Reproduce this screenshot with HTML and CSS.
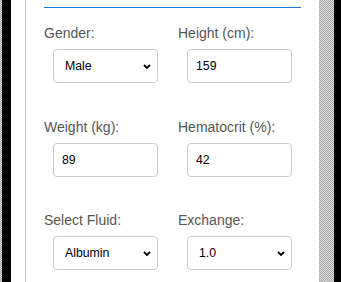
FILE: index.html
```html
<!DOCTYPE html>
<html lang="en">
<head>
    <meta charset="UTF-8">
    <meta name="viewport" content="width=device-width, initial-scale=1.0">
    <title>Plasma Exchange Calculator</title>
    <link rel="stylesheet" href="styles.css">
</head>
<body>
    <div class="edge-dither"></div>
    <div class="edge-black"></div>
    <div class="gutter"></div>
    <main class="panel">
        <hr class="divider">
        <form class="fields">
            <div class="field">
                <label for="gender">Gender:</label>
                <div class="select-wrap">
                    <select id="gender">
                        <option>Male</option>
                        <option>Female</option>
                    </select>
                    <svg class="chevron" width="8" height="5" viewBox="0 0 8 5"><path d="M1 1l3 3 3-3" fill="none" stroke="#000" stroke-width="1.8"/></svg>
                </div>
            </div>
            <div class="field">
                <label for="height">Height (cm):</label>
                <input id="height" type="text" value="159">
            </div>
            <div class="field">
                <label for="weight">Weight (kg):</label>
                <input id="weight" type="text" value="89">
            </div>
            <div class="field">
                <label for="hct">Hematocrit (%):</label>
                <input id="hct" type="text" value="42">
            </div>
            <div class="field">
                <label for="fluid">Select Fluid:</label>
                <div class="select-wrap">
                    <select id="fluid">
                        <option>Albumin</option>
                        <option>Plasma</option>
                    </select>
                    <svg class="chevron" width="8" height="5" viewBox="0 0 8 5"><path d="M1 1l3 3 3-3" fill="none" stroke="#000" stroke-width="1.8"/></svg>
                </div>
            </div>
            <div class="field">
                <label for="exchange">Exchange:</label>
                <div class="select-wrap">
                    <select id="exchange">
                        <option>1.0</option>
                        <option>1.5</option>
                    </select>
                    <svg class="chevron" width="8" height="5" viewBox="0 0 8 5"><path d="M1 1l3 3 3-3" fill="none" stroke="#000" stroke-width="1.8"/></svg>
                </div>
            </div>
        </form>
    </main>
    <div class="scroll-dither"></div>
    <div class="edge-black right"></div>
</body>
</html>
```

FILE: styles.css
```css
html{
    box-sizing: border-box;
    font-family: "Liberation Sans", Arial, sans-serif;
    font-size: 16px;
}
*,
*::after,
*::before{
    box-sizing: inherit;
}
body{
    margin: 0;
    display: flex;
    min-height: 100vh;
    background-color: #fff;
    overflow: hidden;
}
.edge-dither,
.scroll-dither{
    background: repeating-conic-gradient(#a9a9a9 0 25%, #dadada 0 50%) 0 0/2px 2px;
}
.edge-dither{
    width: 2px;
}
.scroll-dither{
    width: 15px;
}
.edge-black{
    width: 9px;
    background-color: #000;
}
.edge-black.right{
    width: 7px;
}
.gutter{
    width: 15px;
    border-right: 1px solid #cdcdcd;
}
.panel{
    flex: 1;
    padding: 7px 18px 0;
}
.divider{
    margin: 0 0 17px;
    border: 0;
    border-top: 1px solid #1976d2;
    height: 0;
}
.fields{
    display: grid;
    grid-template-columns: 1fr 1fr;
    column-gap: 11px;
    row-gap: 35.5px;
}
.field label{
    display: block;
    font-size: 14px;
    line-height: 16px;
    color: #555;
    margin-bottom: 8px;
}
.field input,
.field select{
    display: block;
    width: 105px;
    height: 34px;
    margin: 0 auto;
    border: 1px solid #ccc;
    border-radius: 4px;
    background-color: #fff;
    font-family: inherit;
    font-size: 12.3px;
    color: #000;
    outline: none;
}
.field input{
    padding: 0 8px;
}
.field select{
    appearance: none;
    -webkit-appearance: none;
    padding: 0 20px 0 11px;
}
.select-wrap{
    position: relative;
    width: 105px;
    margin: 0 auto;
}
.chevron{
    position: absolute;
    right: 7px;
    top: 15px;
    pointer-events: none;
}
```
